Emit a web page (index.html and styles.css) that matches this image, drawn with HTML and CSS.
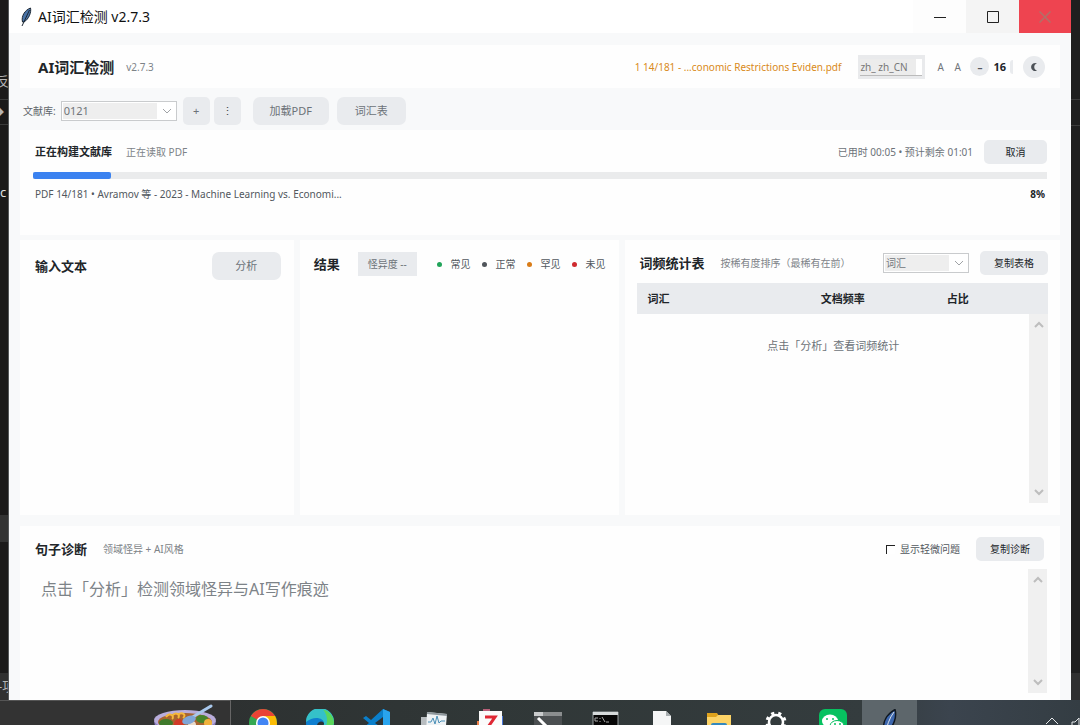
FILE: index.html
```
<!DOCTYPE html>
<html lang="zh-CN">

<head>
    <meta charset="UTF-8" />
    <meta name="viewport" content="width=device-width, initial-scale=1.0" />
    <title>AI词汇检测 v2.7.3</title>
    <link rel="stylesheet" href="styles.css">
</head>

<body>
    <div class="desktop">
        <div class="backdrop backdrop-left">
            <div class="back-tab">反</div>
            <div class="back-crumb">◆</div>
            <div class="back-code">c</div>
            <div class="back-row"></div>
            <div class="back-panel">-项</div>
        </div>

        <div class="window">
            <header class="titlebar">
                <svg class="feather" viewBox="0 0 12 20">
                    <path d="M10.500 1C5 3 1 9 2.500 15L4 15C9 12 11.500 5 10.500 1z" fill="#4a74a8" stroke="#1c2733" />
                    <path d="M9.500 3L2 19" stroke="#1c2733" fill="none" />
                </svg>
                <span class="window-title">AI词汇检测 v2.7.3</span>
                <button class="win-btn" aria-label="最小化">
                    <svg viewBox="0 0 12 12"><path d="M0 6.500H12" /></svg>
                </button>
                <button class="win-btn win-max" aria-label="最大化">
                    <svg viewBox="0 0 12 12"><path d="M.5.5H11.500V11.500H.5z" /></svg>
                </button>
                <button class="win-btn win-close" aria-label="关闭">
                    <svg viewBox="0 0 12 12"><path d="M.5.5L11.500 11.500M11.500.5L.5 11.500" /></svg>
                </button>
            </header>

            <main class="content">
                <section class="card app-header">
                    <h1>AI词汇检测</h1>
                    <span class="muted">v2.7.3</span>
                    <span class="status">1 14/181 - ...conomic Restrictions Eviden.pdf</span>
                    <div class="lang">
                        <select aria-label="语言">
                            <option>zh_ zh_CN</option>
                        </select>
                    </div>
                    <div class="font-size">
                        <span class="letter">A</span>
                        <span class="letter">A</span>
                        <button class="round minus" aria-label="减小字号">–</button>
                        <b>16</b>
                        <button class="sliver" aria-label="增大字号"></button>
                    </div>
                    <button class="round moon" aria-label="深色模式">
                        <svg viewBox="0 0 8 10"><path d="M7 1.500A4 4 0 1 0 7 8.500A3.600 3.600 0 0 1 7 1.500z" /></svg>
                    </button>
                </section>

                <div class="toolbar">
                    <label for="library">文献库:</label>
                    <div class="combo library">
                        <select id="library">
                            <option>0121</option>
                        </select>
                        <svg viewBox="0 0 10 6"><path d="M1 1L5 5L9 1" /></svg>
                    </div>
                    <button class="btn square">+</button>
                    <button class="btn square more">⋮</button>
                    <button class="btn load">加载PDF</button>
                    <button class="btn">词汇表</button>
                </div>

                <section class="card progress">
                    <div class="row">
                        <h3>正在构建文献库</h3>
                        <span class="muted">正在读取 PDF</span>
                        <span class="time">已用时 00:05 • 预计剩余 01:01</span>
                        <button class="btn small">取消</button>
                    </div>
                    <div class="bar">
                        <div class="bar-fill" style="width: 7.700%"></div>
                    </div>
                    <div class="row caption">
                        <span>PDF 14/181 • Avramov 等 - 2023 - Machine Learning vs. Economi...</span>
                        <b>8%</b>
                    </div>
                </section>

                <div class="panels">
                    <section class="card panel panel-input">
                        <div class="row">
                            <h2><label for="source">输入文本</label></h2>
                            <button class="btn analyze">分析</button>
                        </div>
                        <textarea id="source"></textarea>
                    </section>

                    <section class="card panel panel-result">
                        <div class="row">
                            <h2>结果</h2>
                            <span class="badge">怪异度 --</span>
                            <ul class="legend">
                                <li class="common">常见</li>
                                <li class="normal">正常</li>
                                <li class="rare">罕见</li>
                                <li class="unseen">未见</li>
                            </ul>
                        </div>
                    </section>

                    <section class="card panel panel-table">
                        <div class="row">
                            <h2>词频统计表</h2>
                            <span class="muted">按稀有度排序（最稀有在前）</span>
                            <div class="combo sort">
                                <select aria-label="排序">
                                    <option>词汇</option>
                                </select>
                                <svg viewBox="0 0 10 6"><path d="M1 1L5 5L9 1" /></svg>
                            </div>
                            <button class="btn small">复制表格</button>
                        </div>
                        <table>
                            <thead>
                                <tr>
                                    <th>词汇</th>
                                    <th>文档频率</th>
                                    <th>占比</th>
                                    <th></th>
                                </tr>
                            </thead>
                        </table>
                        <div class="scroll-area">
                            <p class="empty">点击「分析」查看词频统计</p>
                            <div class="scrollbar">
                                <svg viewBox="0 0 10 7"><path d="M1 6L5 2L9 6" /></svg>
                                <svg viewBox="0 0 10 7"><path d="M1 1L5 5L9 1" /></svg>
                            </div>
                        </div>
                    </section>
                </div>

                <section class="card diagnosis">
                    <div class="row">
                        <h2>句子诊断</h2>
                        <span class="muted">领域怪异 + AI风格</span>
                        <label class="minor"><input type="checkbox">显示轻微问题</label>
                        <button class="btn small">复制诊断</button>
                    </div>
                    <div class="scroll-area">
                        <p class="hint">点击「分析」检测领域怪异与AI写作痕迹</p>
                        <div class="scrollbar">
                            <svg viewBox="0 0 10 7"><path d="M1 6L5 2L9 6" /></svg>
                            <svg viewBox="0 0 10 7"><path d="M1 1L5 5L9 1" /></svg>
                        </div>
                    </div>
                </section>
            </main>
        </div>

        <div class="backdrop backdrop-right">
            <div class="back-lines"></div>
            <div class="back-panel"></div>
        </div>
    </div>

    <footer class="taskbar">
        <div class="search">
            <!-- soup bowl -->
            <svg class="bowl" viewBox="0 0 64 40">
                <path d="M1 17C3 31 14 39 32 39S61 31 63 17z" fill="#8d7fc0" />
                <ellipse cx="32" cy="16" rx="31" ry="10" fill="#b9addb" />
                <ellipse cx="32" cy="18" rx="27" ry="9" fill="#a8642f" />
                <ellipse cx="13" cy="19" rx="7" ry="4" fill="#3f7a2b" />
                <ellipse cx="49" cy="15" rx="6" ry="4" fill="#47852c" />
                <path d="M13 13C17 7 22 13 19 15M19 12C23 7 28 11 25 14M25 11C29 7 34 11 30 14" fill="none" stroke="#f5b83b" stroke-width="2" />
                <circle cx="26" cy="20" r="5" fill="#d13a28" />
                <circle cx="39" cy="21" r="4" fill="#e9d9c8" />
                <circle cx="55" cy="19" r="4" fill="#f0b23c" />
                <path d="M38 14L58 2" stroke="#a9c8ec" stroke-width="3" stroke-linecap="round" />
                <ellipse cx="36" cy="16" rx="7" ry="4" fill="#7fa6d8" transform="rotate(-20 36 16)" />
            </svg>
        </div>
        <div class="apps">
            <!-- chrome -->
            <a href="#" aria-label="Chrome">
                <svg viewBox="0 0 28 28">
                    <circle cx="14" cy="14" r="14" fill="#34a853" />
                    <path d="M14 14L1.900 7A14 14 0 0 1 26.100 7z" fill="#ea4335" />
                    <path d="M14 7H26.100A14 14 0 0 1 14 28L20 16z" fill="#fbbc05" />
                    <circle cx="14" cy="14" r="7" fill="#fff" />
                    <circle cx="14" cy="14" r="5.500" fill="#4285f4" />
                </svg>
            </a>
            <!-- edge -->
            <a href="#" aria-label="Edge">
                <svg viewBox="0 0 28 28">
                    <circle cx="14" cy="14" r="14" fill="#0f7fd0" />
                    <path d="M0 13A14 14 0 0 1 28 13C28 18 24 20 19 19C16 18 18 17 18 14C18 9 8 6 0 13z" fill="#35c1c9" />
                    <path d="M17 .400A14 14 0 0 1 28 13C28 18 24 20 19 19C22 14 22 6 17 .400z" fill="#5bd65c" />
                    <path d="M11 16A4 4 0 0 1 18 14C18 17 16 18 19 19L17 22C13 22 11 20 11 16z" fill="#2b3236" />
                </svg>
            </a>
            <!-- vs code -->
            <a href="#" aria-label="VS Code">
                <svg viewBox="0 0 28 28">
                    <path d="M20 0L27 3V25L20 28L8 17L3 21L0 19L6 14L0 9L3 7L8 11z" fill="#0a7fcb" />
                    <path d="M20 0L27 3V25L20 28z" fill="#29a4ee" />
                    <path d="M20 8V20L12 14z" fill="#2d3336" />
                </svg>
            </a>
            <!-- monitor -->
            <a href="#" aria-label="性能">
                <svg viewBox="0 0 28 28">
                    <path d="M1 8H20V28H1z" fill="#b8bdc0" />
                    <path d="M7 3L27 5L25 28H6z" fill="#eef2f4" />
                    <path d="M7 3L27 5V7L7 5z" fill="#8e979c" />
                    <path d="M8 13H11L13 9L15 15L17 7L19 14L21 12H25" fill="none" stroke="#4b90b8" />
                </svg>
            </a>
            <!-- zotero -->
            <a href="#" aria-label="Zotero">
                <svg viewBox="0 0 28 28">
                    <path d="M6 0H13V4H6z" fill="#b96079" />
                    <path d="M22 7H26V16H22z" fill="#4b78d8" />
                    <path d="M0 12H6V24H0z" fill="#ef824a" />
                    <path d="M2 2H25V28H2z" fill="#fbfbfb" />
                    <path d="M8 8H18L9 21H19" fill="none" stroke="#df2834" stroke-width="3" />
                </svg>
            </a>
            <!-- terminal -->
            <a href="#" aria-label="终端">
                <svg viewBox="0 0 28 28">
                    <path d="M0 3H28V28H0z" fill="#4b4f51" />
                    <path d="M0 3H28V7H0z" fill="#8b8e8f" />
                    <path d="M0 3H9V7H0z" fill="#c9cbcc" />
                    <path d="M4 9L11 16L4 23" fill="none" stroke="#fff" stroke-width="3" />
                </svg>
            </a>
            <!-- cmd -->
            <a href="#" aria-label="命令提示符">
                <svg viewBox="0 0 28 28">
                    <path d="M2 3H27V28H2z" fill="#070707" stroke="#9ba1a3" />
                    <path d="M2 3H27V6H2z" fill="#d6dadb" />
                    <path d="M7 9H4V12H7M9 9V10M9 12V13M11 8L14 13M15 13H18" fill="none" stroke="#aaa" />
                </svg>
            </a>
            <!-- blank file -->
            <a href="#" aria-label="文件">
                <svg viewBox="0 0 28 28">
                    <path d="M5 2H18L23 7V28H5z" fill="#f5f6f6" />
                    <path d="M18 2V7H23z" fill="#a9afb1" />
                </svg>
            </a>
            <!-- explorer -->
            <a href="#" aria-label="资源管理器">
                <svg viewBox="0 0 28 28">
                    <path d="M2 4H12L14 7H26V28H2z" fill="#dfa31d" />
                    <path d="M2 8H11L13 6H26V28H2z" fill="#fdd467" />
                    <path d="M6 16Q6 14 8 14H20Q22 14 22 16V28H6z" fill="#3488bd" />
                </svg>
            </a>
            <!-- settings -->
            <a href="#" aria-label="设置">
                <svg viewBox="0 0 28 28">
                    <circle cx="14" cy="13" r="7" fill="none" stroke="#fff" stroke-width="2.500" />
                    <circle cx="14" cy="13" r="9" fill="none" stroke="#fff" stroke-width="3" stroke-dasharray="3.200 3.870" stroke-dashoffset="1.600" transform="rotate(22.500 14 13)" />
                </svg>
            </a>
            <!-- wechat -->
            <a href="#" aria-label="微信">
                <svg viewBox="0 0 28 28">
                    <rect width="28" height="28" rx="6" fill="#07c160" />
                    <ellipse cx="11" cy="12" rx="8" ry="6.500" fill="#fff" />
                    <ellipse cx="18" cy="17" rx="7" ry="5.500" fill="#fff" stroke="#07c160" />
                    <circle cx="8" cy="10" r="1" fill="#07c160" />
                    <circle cx="14" cy="10" r="1" fill="#07c160" />
                    <circle cx="16" cy="15" r="1" fill="#07c160" />
                    <circle cx="21" cy="15" r="1" fill="#07c160" />
                </svg>
            </a>
            <!-- python/tk feather -->
            <a href="#" class="active" aria-label="AI词汇检测">
                <svg viewBox="0 0 28 28">
                    <path d="M19 .500C11 5 6 13 8 23L11 23C18 17 21 8 19 .500z" fill="#3c66ad" stroke="#101820" stroke-width="1.500" />
                    <path d="M18 3Q11 12 9 28" fill="none" stroke="#dde3e8" />
                </svg>
            </a>
        </div>
        <div class="tray">
            <svg viewBox="0 0 14 8"><path d="M1 7L7 1L13 7" /></svg>
            <svg class="speaker" viewBox="0 0 9 16"><path d="M1 5H4L8 1V15L4 11H1z" /></svg>
        </div>
    </footer>
</body>

</html>
```
FILE: styles.css
```
* {
    box-sizing: border-box;
}

body {
    margin: 0;
    min-height: 100vh;
    display: flex;
    flex-direction: column;
    overflow: hidden;
    background: #1e1e1e;
    color: #212529;
    font-family: "Noto Sans", "Noto Sans CJK SC", sans-serif;
    font-size: 10px;
    line-height: 16px;
}

h1, h2, h3, p, ul {
    margin: 0;
    padding: 0;
}

h1 {
    font-size: 15px;
    line-height: 20px;
}

h2 {
    font-size: 13px;
    line-height: 20px;
}

h3 {
    font-size: 11px;
}

button, select, textarea, input {
    font: inherit;
    color: inherit;
    margin: 0;
    padding: 0;
    border: 0;
    border-radius: 0;
    outline: none;
}

svg {
    display: block;
    flex: none;
}

/* desktop behind the window */
.desktop {
    flex: 1;
    display: grid;
    grid-template-columns: 9px 1fr 9px;
}

.backdrop {
    display: flex;
    flex-direction: column;
    overflow: hidden;
    background: #1b1a1a;
    color: #b5b5b5;
}

.backdrop-left {
    border-right: 1px solid #55585a;
}

.back-tab {
    height: 100px;
    padding-top: 73px;
    border-bottom: 1px solid #3a3a3a;
    font-size: 13px;
    margin-left: -4px;
}

.back-crumb {
    height: 25px;
    padding-top: 4px;
    border-bottom: 1px solid #3a3a3a;
    margin-left: -6px;
}

.back-code {
    flex: 1;
    padding-top: 59px;
    font-size: 13px;
    color: #e2e2e2;
}

.back-row {
    height: 27px;
    background: #333333;
    margin-bottom: 131px;
}

.back-panel {
    height: 27px;
    padding-top: 5px;
    background: #303030;
    font-size: 13px;
    margin-left: -2px;
    white-space: nowrap;
}

.backdrop-right {
    justify-content: space-between;
    background: #1f1f1f;
}

.back-lines {
    height: 126px;
    padding-top: 99px;
    border-bottom: 1px solid #3c3c3c;
}

.back-lines::before {
    content: "";
    display: block;
    height: 1px;
    background: #3c3c3c;
}

/* window */
.window {
    display: flex;
    flex-direction: column;
    min-width: 0;
    background: #f8f9fa;
}

.titlebar {
    display: flex;
    align-items: center;
    height: 33px;
    background: #fff;
    padding-left: 11px;
    color: #111;
}

.feather {
    width: 12px;
    height: 20px;
}

.window-title {
    flex: 1;
    margin-left: 6px;
    font-size: 14px;
    line-height: 20px;
}

.win-btn {
    display: flex;
    align-items: center;
    justify-content: center;
    width: 53px;
    height: 33px;
    background: #fdfdfd;
}

.win-btn svg {
    width: 12px;
    height: 12px;
    fill: none;
    stroke: #222;
}

.win-max {
    background: #f4f4f4;
}

.win-close {
    width: 52px;
    background: #ee4450;
}

.win-close svg {
    stroke: #b07068;
    stroke-width: 1.500;
}

.content {
    flex: 1;
    display: flex;
    flex-direction: column;
    padding: 12px 11px 0;
}

.card {
    background: #fefefe;
}

.muted {
    color: #7d8388;
}

.row {
    display: flex;
    align-items: center;
}

/* header */
.app-header {
    display: flex;
    align-items: center;
    height: 43px;
    padding: 0 15px 0 18px;
}

.app-header .muted {
    margin-left: 12px;
}

.status {
    margin-left: auto;
    color: #d98a20;
}

.lang {
    width: 67px;
    height: 24px;
    margin-left: 17px;
    padding: 4px 3px 3px 2px;
    background: #e9eaec;
}

.lang select {
    display: block;
    width: 100%;
    height: 17px;
    appearance: none;
    background: linear-gradient(to right, #ececec 56px, #fff 56px);
    border-bottom: 1px solid #bbb;
    color: #777;
}

.font-size {
    display: flex;
    align-items: center;
    margin-left: 11px;
    color: #212529;
}

.letter {
    width: 17px;
    padding-left: 1px;
    color: #70757a;
}

.round {
    display: flex;
    align-items: center;
    justify-content: center;
    border-radius: 50%;
    background: #e9ebee;
    color: #555a60;
}

.minus {
    width: 19px;
    height: 19px;
    font-weight: bold;
}

.font-size b {
    margin-left: 4px;
    font-size: 11px;
}

.sliver {
    width: 3px;
    height: 14px;
    margin-left: 4px;
    border-radius: 3px 0 0 3px;
    background: #e9ebee;
}

.moon {
    width: 22px;
    height: 22px;
    margin-left: 10px;
}

.moon svg {
    width: 8px;
    height: 10px;
    fill: #4c5157;
}

/* toolbar */
.toolbar {
    display: flex;
    align-items: center;
    height: 28px;
    margin: 9px 0 5px;
    padding-left: 3px;
    color: #5f656a;
}

.combo {
    display: flex;
    align-items: center;
    height: 20px;
    background: #fff;
    border: 1px solid #c9cbcd;
}

.combo select {
    flex: 1;
    height: 16px;
    margin-left: 1px;
    padding-left: 1px;
    appearance: none;
    background: #eeeeee;
    color: #70757a;
}

.combo svg {
    width: 10px;
    height: 6px;
    margin: 0 4px 0 5px;
    fill: none;
    stroke: #a0a3a6;
}

.library {
    width: 116px;
    margin: 0 6px 0 5px;
    font-size: 11px;
}

.btn {
    height: 28px;
    padding: 0 18px;
    border-radius: 7px;
    background: #e9ebee;
    color: #6c7278;
    font-size: 11px;
}

.square {
    width: 27px;
    padding: 0;
    border-radius: 5px;
    margin-right: 4px;
}

.more {
    color: #3f4449;
}

.load {
    width: 76px;
    margin: 0 8px;
    padding: 0;
}

.small {
    height: 24px;
    padding: 0 14px;
    border-radius: 5px;
    color: #212529;
    font-size: 10px;
}

/* progress */
.progress {
    padding: 10px 13px 33px;
}

.progress h3 {
    margin: 0 14px 0 2px;
}

.time {
    margin-left: auto;
    color: #6c7278;
}

.progress .small {
    width: 63px;
    margin-left: 11px;
}

.bar {
    height: 7px;
    margin: 8px 0 7px;
    background: #eaebec;
}

.bar-fill {
    height: 7px;
    border-radius: 2px;
    background: #3b82f0;
}

.caption {
    justify-content: space-between;
    padding: 0 2px;
    color: #51575d;
}

.caption b {
    color: #212529;
}

/* panels */
.panels {
    flex: 1;
    display: grid;
    grid-template-columns: 274fr 320fr 435fr;
    gap: 6px;
    margin: 5px 0 11px;
    min-height: 274px;
}

.panel {
    display: flex;
    flex-direction: column;
    padding: 12px;
}

.panel-input {
    padding: 12px 13px 12px 15px;
}

.analyze {
    width: 69px;
    margin-left: auto;
    padding: 0;
}

.panel-input textarea {
    flex: 1;
    width: 100%;
    margin-top: 10px;
    resize: none;
    background: transparent;
    font-size: 16px;
}

.panel-result {
    padding-left: 14px;
}

.badge {
    height: 24px;
    margin-left: 18px;
    padding: 0 10px;
    background: #e9ebee;
    color: #6c7278;
    line-height: 24px;
}

.legend {
    display: flex;
    gap: 12px;
    margin-left: auto;
    padding-right: 2px;
    list-style: none;
    color: #51575d;
}

.legend li {
    display: flex;
    align-items: center;
    gap: 8px;
}

.legend li::before {
    content: "";
    width: 5px;
    height: 5px;
    border-radius: 50%;
    background: #50555b;
}

.legend .common::before {
    background: #21a45a;
}

.legend .rare::before {
    background: #d97c18;
}

.legend .unseen::before {
    background: #cf2b2f;
}

.panel-table {
    padding-top: 11px;
}

.panel-table h2 {
    margin: 0 16px 0 2px;
}

.sort {
    width: 86px;
    margin: 0 11px 0 auto;
}

table {
    width: 100%;
    margin-top: 8px;
    border-collapse: collapse;
    table-layout: fixed;
    background: #e9ebee;
    font-size: 11px;
}

th {
    width: 28%;
    height: 31px;
    padding: 0;
}

th:first-child {
    width: 36%;
    padding-left: 10px;
    text-align: left;
}

th:last-child {
    width: 8%;
}

.scroll-area {
    flex: 1;
    display: flex;
}

.empty {
    flex: 1;
    padding-top: 24px;
    text-align: center;
    color: #6c7278;
    font-size: 11px;
}

.scrollbar {
    display: flex;
    flex-direction: column;
    justify-content: space-between;
    align-items: center;
    width: 19px;
    padding: 7px 0;
    background: #f0f0f0;
}

.scrollbar svg {
    width: 10px;
    height: 7px;
    fill: none;
    stroke: #bdbdbd;
    stroke-width: 2;
}

/* diagnosis */
.diagnosis {
    display: flex;
    flex-direction: column;
    min-height: 174px;
    padding: 11px 13px 7px 15px;
}

.diagnosis .muted {
    margin-left: 16px;
}

.diagnosis .small {
    margin: 0 3px 0 16px;
}

.minor {
    display: flex;
    align-items: center;
    gap: 5px;
    margin-left: auto;
    color: #51575d;
}

.minor input {
    width: 9px;
    height: 9px;
    appearance: none;
    border-top: 1px solid #222;
    border-left: 1px solid #222;
    background: #fff;
}

.diagnosis .scroll-area {
    margin-top: 8px;
}

.hint {
    flex: 1;
    padding: 8px 6px;
    color: #7d8388;
    font-size: 16px;
    line-height: 24px;
}

/* taskbar */
.taskbar {
    display: flex;
    height: 25px;
    overflow: hidden;
    background: linear-gradient(to right, #2b2c2c, #303737 45%, #343c3e 80%, #3b444e 88%, #343d43);
}

.search {
    display: flex;
    justify-content: flex-end;
    width: 231px;
    padding: 3px 13px 0 0;
    border-top: 1px solid #555;
    border-right: 1px solid #666;
    background: #333;
}

.bowl {
    width: 64px;
    height: 40px;
}

.apps {
    flex: 1;
    display: flex;
    gap: 2px;
    margin-left: 4px;
}

.apps a {
    display: flex;
    justify-content: center;
    width: 55px;
    padding-top: 9px;
}

.apps svg {
    width: 28px;
    height: 28px;
}

.apps .active {
    background: #5d666b;
}

.tray {
    display: flex;
    gap: 12px;
    padding-top: 17px;
}

.tray svg {
    width: 14px;
    height: 8px;
    fill: none;
    stroke: #e4e7e9;
}

.tray .speaker {
    width: 9px;
    height: 16px;
}
```
